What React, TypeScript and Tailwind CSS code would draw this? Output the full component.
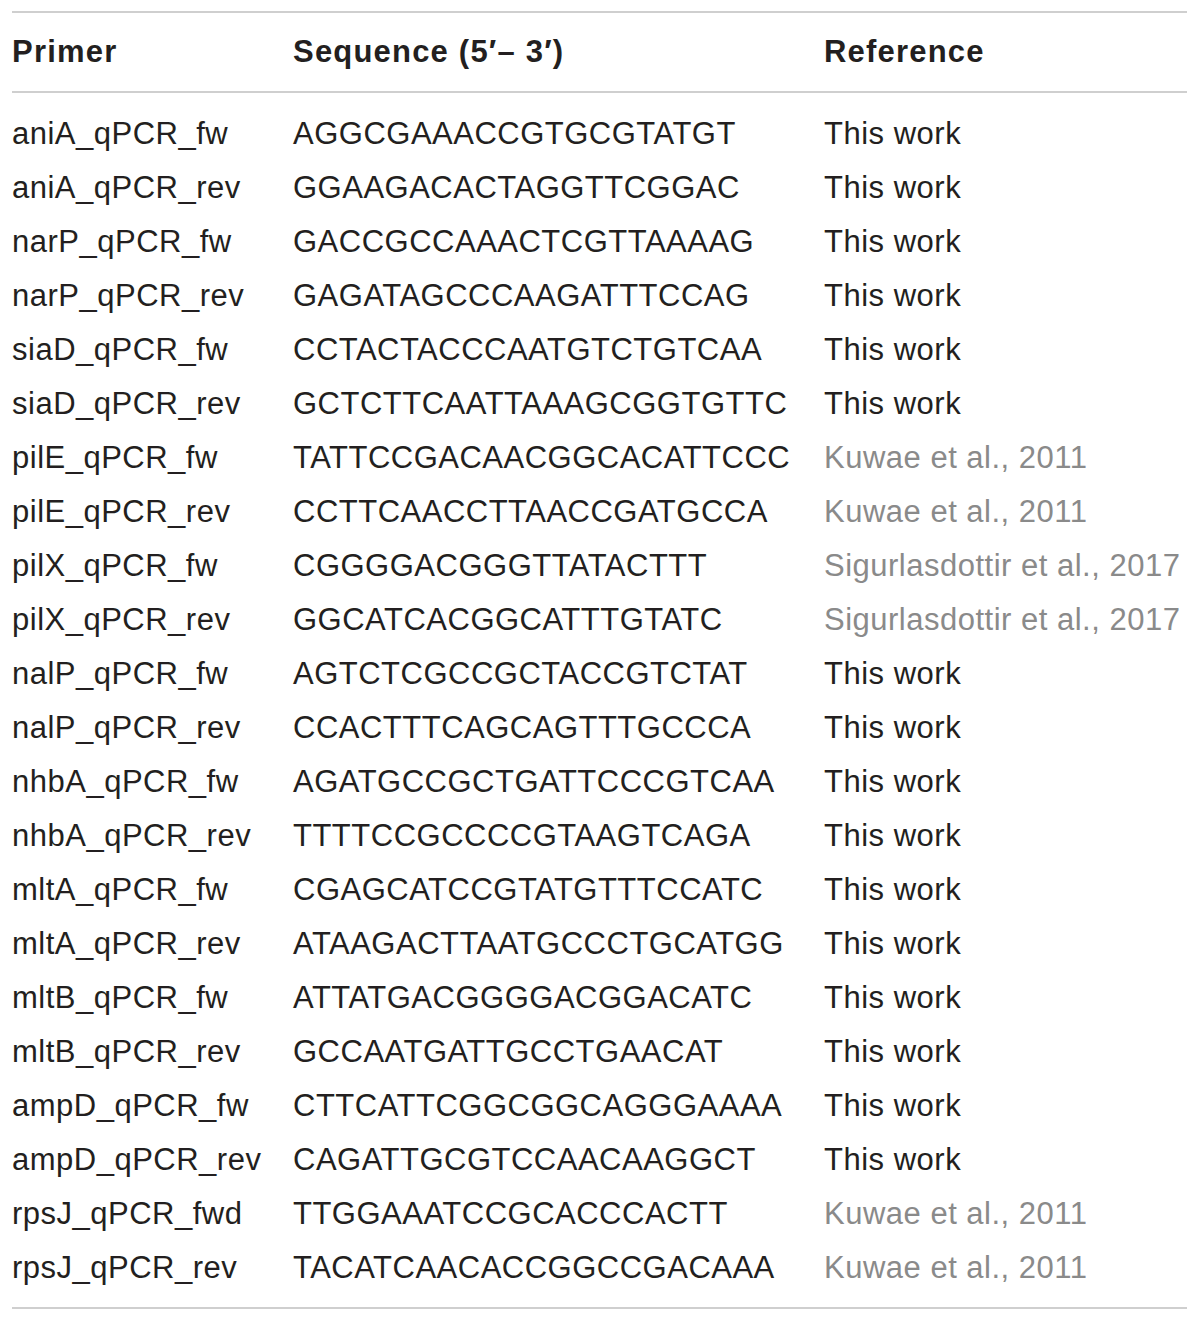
const rows: [string, string, string][] = [
  ["aniA_qPCR_fw", "AGGCGAAACCGTGCGTATGT", "This work"],
  ["aniA_qPCR_rev", "GGAAGACACTAGGTTCGGAC", "This work"],
  ["narP_qPCR_fw", "GACCGCCAAACTCGTTAAAAG", "This work"],
  ["narP_qPCR_rev", "GAGATAGCCCAAGATTTCCAG", "This work"],
  ["siaD_qPCR_fw", "CCTACTACCCAATGTCTGTCAA", "This work"],
  ["siaD_qPCR_rev", "GCTCTTCAATTAAAGCGGTGTTC", "This work"],
  ["pilE_qPCR_fw", "TATTCCGACAACGGCACATTCCC", "Kuwae et al., 2011"],
  ["pilE_qPCR_rev", "CCTTCAACCTTAACCGATGCCA", "Kuwae et al., 2011"],
  ["pilX_qPCR_fw", "CGGGGACGGGTTATACTTT", "Sigurlasdottir et al., 2017"],
  ["pilX_qPCR_rev", "GGCATCACGGCATTTGTATC", "Sigurlasdottir et al., 2017"],
  ["nalP_qPCR_fw", "AGTCTCGCCGCTACCGTCTAT", "This work"],
  ["nalP_qPCR_rev", "CCACTTTCAGCAGTTTGCCCA", "This work"],
  ["nhbA_qPCR_fw", "AGATGCCGCTGATTCCCGTCAA", "This work"],
  ["nhbA_qPCR_rev", "TTTTCCGCCCCGTAAGTCAGA", "This work"],
  ["mltA_qPCR_fw", "CGAGCATCCGTATGTTTCCATC", "This work"],
  ["mltA_qPCR_rev", "ATAAGACTTAATGCCCTGCATGG", "This work"],
  ["mltB_qPCR_fw", "ATTATGACGGGGACGGACATC", "This work"],
  ["mltB_qPCR_rev", "GCCAATGATTGCCTGAACAT", "This work"],
  ["ampD_qPCR_fw", "CTTCATTCGGCGGCAGGGAAAA", "This work"],
  ["ampD_qPCR_rev", "CAGATTGCGTCCAACAAGGCT", "This work"],
  ["rpsJ_qPCR_fwd", "TTGGAAATCCGCACCCACTT", "Kuwae et al., 2011"],
  ["rpsJ_qPCR_rev", "TACATCAACACCGGCCGACAAA", "Kuwae et al., 2011"],
];

export default function App() {
  return (
    <div className="w-[1200px] h-[1323px] bg-white pt-[11px] pl-[12px] pr-[13px] font-['Liberation_Sans',Arial,sans-serif] text-[#231f20]">
      <div className="border-t-2 border-b-2 border-[#cfcfcf]">
        <div className="grid grid-cols-[281px_531px_1fr] h-[80px] items-center border-b-2 border-[#cfcfcf] text-[31px] font-bold tracking-[1.2px]">
          <span>Primer</span>
          <span>Sequence (5′– 3′)</span>
          <span>Reference</span>
        </div>
        <div className="pt-[14px] pb-[12px]">
          {rows.map(([primer, seq, ref]) => (
            <div
              key={primer}
              className="grid grid-cols-[281px_531px_1fr] h-[54px] items-center text-[31px] tracking-[0.5px] whitespace-nowrap"
            >
              <span>{primer}</span>
              <span>{seq}</span>
              <span className={ref === "This work" ? "" : "text-[#8a8a8a]"}>{ref}</span>
            </div>
          ))}
        </div>
      </div>
    </div>
  );
}
